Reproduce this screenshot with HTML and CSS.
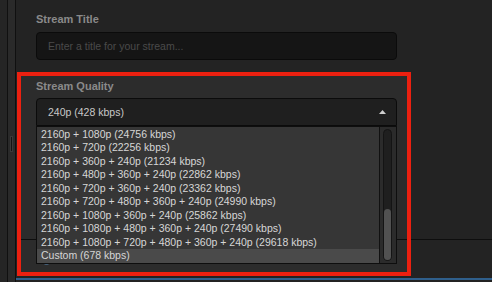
FILE: index.html
```html
<!DOCTYPE html>
<html>
<head>
<meta charset="utf-8">
<link rel="stylesheet" href="styles.css">
</head>
<body>
<div class="app">
  <aside class="rail">
    <div class="rail-a"></div>
    <div class="rail-b"><span class="grip"></span></div>
  </aside>
  <main class="main">
    <section class="title-field">
      <div class="label">Stream Title</div>
      <div class="input">Enter a title for your stream...</div>
    </section>
    <section class="quality">
      <span class="bg-line"></span>
      <span class="radio"></span>
      <div class="label">Stream Quality</div>
      <div class="select">
        <span>240p (428 kbps)</span>
        <svg class="arrow" width="7" height="4" viewBox="0 0 7 4"><polygon points="0,4 3.5,0 7,4" fill="#cfcfcf"/></svg>
      </div>
      <div class="list">
        <ul class="options">
          <li>2160p + 1080p (24756 kbps)</li>
          <li>2160p + 720p (22256 kbps)</li>
          <li>2160p + 360p + 240p (21234 kbps)</li>
          <li>2160p + 480p + 360p + 240p (22862 kbps)</li>
          <li>2160p + 720p + 360p + 240p (23362 kbps)</li>
          <li>2160p + 720p + 480p + 360p + 240p (24990 kbps)</li>
          <li>2160p + 1080p + 360p + 240p (25862 kbps)</li>
          <li>2160p + 1080p + 480p + 360p + 240p (27490 kbps)</li>
          <li>2160p + 1080p + 720p + 480p + 360p + 240p (29618 kbps)</li>
          <li class="selected">Custom (678 kbps)</li>
        </ul>
        <div class="scrollbar"><div class="track"><div class="thumb"></div></div></div>
      </div>
    </section>
    <div class="bottom-bar"></div>
  </main>
</div>
</body>
</html>
```

FILE: styles.css
```css
* { box-sizing: border-box; }
html, body { margin: 0; padding: 0; }
body {
  width: 492px;
  height: 282px;
  overflow: hidden;
  background: #232323;
  font-family: "Liberation Sans", Arial, sans-serif;
}
.app {
  display: flex;
  width: 492px;
  height: 282px;
}
.rail {
  display: flex;
  width: 16px;
  flex: none;
}
.rail-a {
  width: 8px;
  background: #252525;
  border-right: 1px solid #101010;
}
.rail-b {
  width: 8px;
  background: #2a2a2a;
  border-right: 1px solid #101010;
  display: flex;
  flex-direction: column;
  padding-top: 136px;
}
.grip {
  display: block;
  width: 3px;
  height: 16px;
  margin-left: 2px;
  background: #141414;
  border: 1px solid #3a3a3a;
}
.main {
  flex: 1;
  position: relative;
  background: #232323;
}
.main::after {
  content: "";
  position: absolute;
  top: 239px;
  left: 395px;
  right: 0;
  height: 1px;
  background: #0e0e0e;
}
.label {
  font-size: 11px;
  font-weight: bold;
  line-height: 13px;
  color: #8a8a8a;
}
.title-field {
  padding: 13px 0 0 20px;
}
.input {
  margin-top: 6px;
  width: 361px;
  height: 28px;
  border: 1px solid #0b0b0b;
  border-radius: 4px;
  background: #151515;
  padding-left: 11px;
  font-size: 10.5px;
  line-height: 26px;
  color: #4a4a4a;
}
.quality {
  position: relative;
  margin: 12px 0 0 1px;
  width: 394px;
  border: 4px solid #ec2010;
  background: #2c2c2c;
  padding: 4px 0 8px 15px;
}
.bg-line {
  position: absolute;
  top: 163px;
  left: 0;
  right: 0;
  height: 1px;
  background: #0e0e0e;
}
.radio {
  position: absolute;
  left: 21px;
  top: 180px;
  width: 9px;
  height: 9px;
  border-radius: 50%;
  border: 1px solid #4f7394;
  background: #1b1b1b;
}
.quality .label {
  position: relative;
}
.select {
  margin-top: 5px;
  width: 361px;
  height: 28px;
  border: 1px solid #0b0b0b;
  border-radius: 4px 4px 0 0;
  background: #1f1f1f;
  display: flex;
  align-items: center;
  justify-content: space-between;
  padding: 0 10px 0 11px;
  font-size: 10.5px;
  color: #c8c8c8;
  position: relative;
}
.arrow { display: block; }
.list {
  position: relative;
  z-index: 1;
  display: flex;
  width: 361px;
  height: 138px;
  border: 1px solid #0e0e0e;
}
.options {
  flex: 1;
  margin: 0;
  padding: 0.5px 0 0 0;
  list-style: none;
  background: #363636;
}
.options li {
  height: 13.5px;
  line-height: 13.5px;
  padding-left: 4px;
  font-size: 10.5px;
  color: #d6d6d6;
  white-space: nowrap;
}
.options li.selected {
  background: #4a4a4a;
}
.scrollbar {
  width: 17px;
  flex: none;
  border-left: 1px solid #111;
  background: #2b2b2b;
  padding: 2px 4px 2px 3px;
  display: flex;
}
.track {
  flex: 1;
  border: 1px solid #141414;
  border-radius: 5px;
  background: #1f1f1f;
  display: flex;
  flex-direction: column;
  justify-content: flex-end;
}
.thumb {
  height: 51px;
  border-radius: 4px;
  background: #515151;
}
.bottom-bar {
  margin-top: 2px;
  height: 2px;
  background: #2f5f8c;
}
```
